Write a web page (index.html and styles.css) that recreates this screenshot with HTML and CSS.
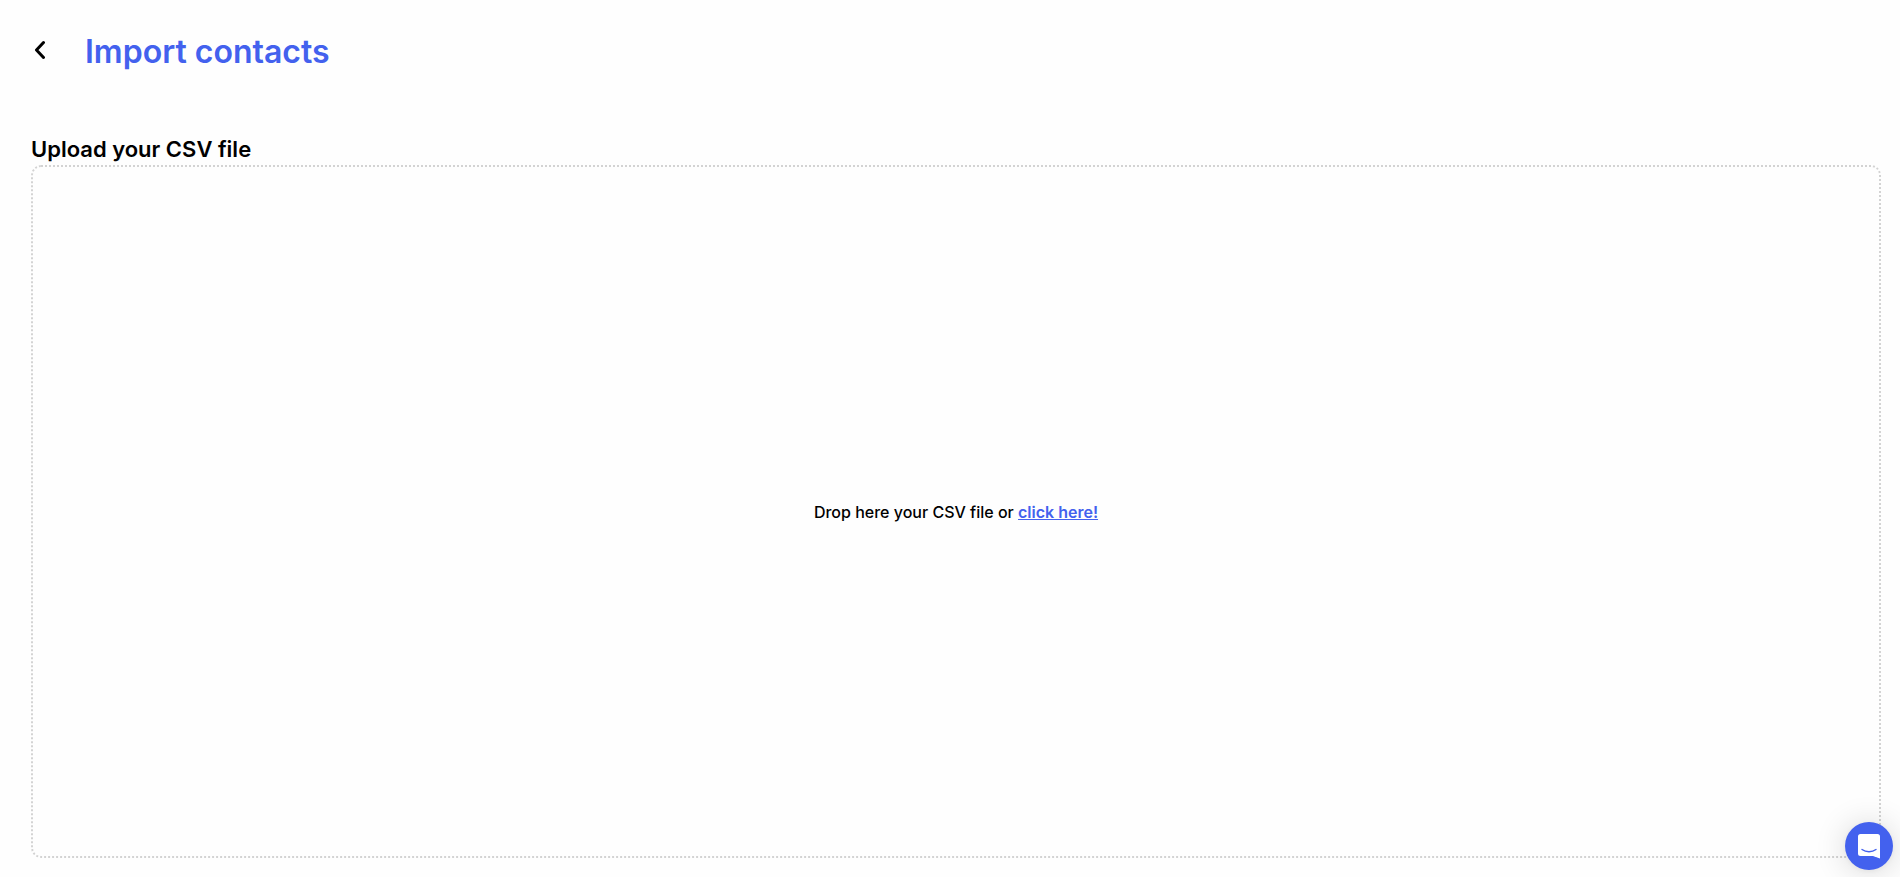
FILE: index.html
```html
<!DOCTYPE html>
<html lang="en">
<head>
<meta charset="utf-8">
<meta name="viewport" content="width=device-width, initial-scale=1">
<title>Import contacts</title>
<link rel="stylesheet" href="styles.css">
</head>
<body>
<main class="page">
  <header class="page-header">
    <button class="back" type="button" aria-label="Back">
      <svg width="14" height="20" viewBox="0 0 14 20" fill="none" stroke="currentColor" stroke-width="3" stroke-linecap="round" stroke-linejoin="round" aria-hidden="true"><path d="M12.500 2.500 5.500 10l7 7.500"/></svg>
    </button>
    <h1 class="title">Import contacts</h1>
  </header>
  <h2 class="subtitle">Upload your CSV file</h2>
  <section class="dropzone">
    <p class="hint">Drop here your CSV file or <a class="hint-link" href="#">click here!</a></p>
  </section>
</main>
<button class="launcher" type="button" aria-label="Open chat">
  <svg width="22" height="25" viewBox="0 0 22 25" aria-hidden="true"><path fill="#fff" d="M2.500 0h17A2.500 2.500 0 0 1 22 2.500V24.500S18.500 23.300 15 22H2.500A2.500 2.500 0 0 1 0 19.500v-17A2.500 2.500 0 0 1 2.500 0Z"/><path d="M4 15.500c4 3 10 3 14 0" fill="none" stroke="#4361ee" stroke-width="1.400" stroke-linecap="round"/></svg>
</button>
</body>
</html>
```
FILE: styles.css
```css
* {
  box-sizing: border-box;
}

body {
  margin: 0;
  background: #fefefe;
  color: #000;
  font-family: Inter, "Liberation Sans", sans-serif;
}

.page {
  display: flex;
  flex-direction: column;
  min-height: 100vh;
  padding: 32px 19px 19px 31px;
}

.page-header {
  display: flex;
  align-items: center;
  gap: 40px;
  margin-bottom: 61px;
}

.back {
  display: flex;
  padding: 0 0 4px;
  border: 0;
  background: none;
  color: inherit;
  cursor: pointer;
}

.title {
  margin: 0;
  color: #4361ee;
  font-size: 32px;
  font-weight: 600;
  line-height: 40px;
}

.subtitle {
  margin: 0;
  font-size: 22px;
  font-weight: 600;
  line-height: 32px;
}

.dropzone {
  display: flex;
  flex: 1;
  align-items: center;
  justify-content: center;
  border: 2px dotted #d3d3d3;
  border-radius: 10px;
}

.hint {
  margin: 0;
  font-size: 16px;
  font-weight: 500;
  line-height: 20px;
}

.hint-link {
  color: #4361ee;
  font-weight: 600;
}

.launcher {
  position: fixed;
  right: 7px;
  bottom: 7px;
  display: flex;
  align-items: center;
  justify-content: center;
  width: 48px;
  height: 48px;
  padding: 0;
  border: 0;
  border-radius: 50%;
  background: #4361ee;
  box-shadow: 0 1px 6px rgba(0, 0, 0, 0.06), 0 2px 32px rgba(0, 0, 0, 0.16);
  cursor: pointer;
}
```
